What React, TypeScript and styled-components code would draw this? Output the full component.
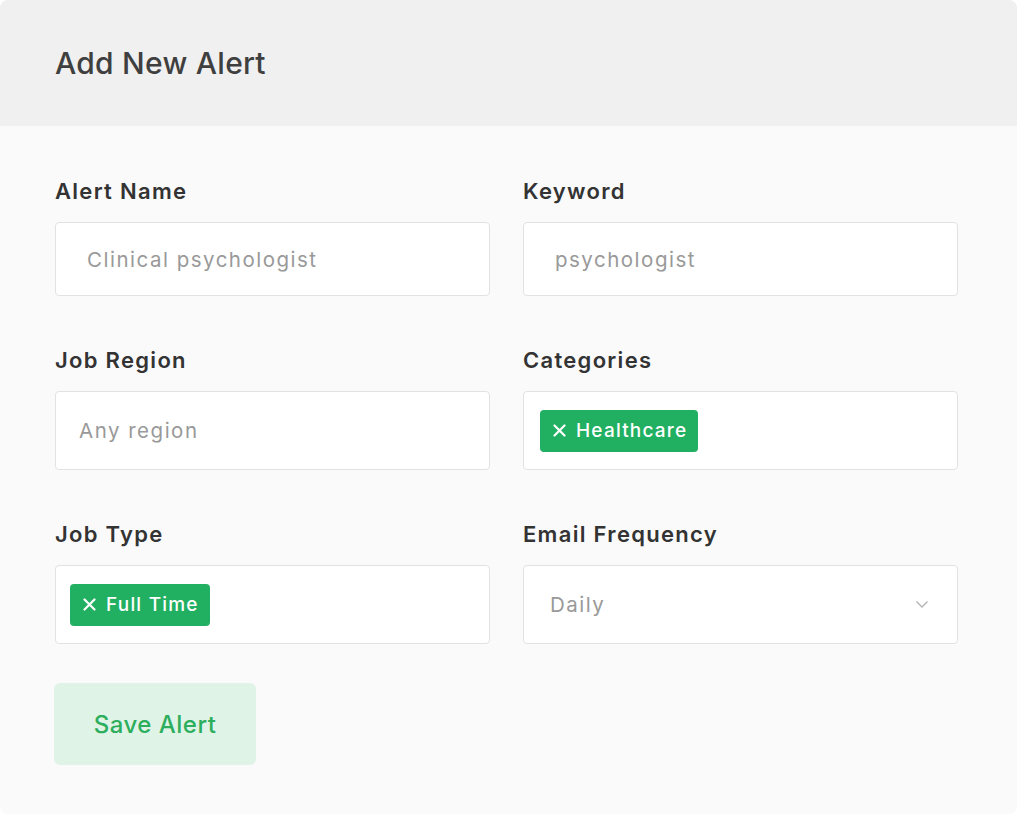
import styled, { createGlobalStyle } from "styled-components";

const GlobalStyle = createGlobalStyle`
  html, body {
    margin: 0;
    padding: 0;
    background: #ffffff;
  }
  body {
    font-family: "Inter", "Liberation Sans", sans-serif;
  }
`;

const FONT = `"Inter", "Open Sans", sans-serif`;

type FieldProps = {
  label: string;
  height: number;
  pad: number;
  children: React.ReactNode;
};

function Field({ label, height, pad, children }: FieldProps) {
  return (
    <FieldWrap>
      <Label>{label}</Label>
      <Box $height={height} $pad={pad}>
        {children}
      </Box>
    </FieldWrap>
  );
}

function Tag({ children }: { children: string }) {
  return (
    <Chip>
      <ChipX width="13" height="13" viewBox="0 0 13 13">
        <path d="M1.5 1.5 L11.5 11.5 M11.5 1.5 L1.5 11.5" stroke="#ffffff" strokeWidth="2.2" strokeLinecap="round" />
      </ChipX>
      {children}
    </Chip>
  );
}

export default function App() {
  return (
    <>
      <GlobalStyle />
      <Card>
        <Header>
          <Title>Add New Alert</Title>
        </Header>
        <Body>
          <Grid>
            <Field label="Alert Name" height={74} pad={31}>
              <Value>Clinical psychologist</Value>
            </Field>
            <Field label="Keyword" height={74} pad={31}>
              <Value>psychologist</Value>
            </Field>
            <Field label="Job Region" height={79} pad={23}>
              <Value>Any region</Value>
            </Field>
            <Field label="Categories" height={79} pad={16}>
              <Tag>Healthcare</Tag>
            </Field>
            <Field label="Job Type" height={79} pad={14}>
              <Tag>Full Time</Tag>
            </Field>
            <Field label="Email Frequency" height={79} pad={26}>
              <Value>Daily</Value>
              <Chevron width="14" height="9" viewBox="0 0 14 9">
                <path d="M1.5 1.5 L7 7 L12.5 1.5" fill="none" stroke="#b5b5b5" strokeWidth="1.4" />
              </Chevron>
            </Field>
          </Grid>
          <SaveButton>Save Alert</SaveButton>
        </Body>
      </Card>
    </>
  );
}

const Card = styled("div")`
  width: 1017px;
  height: 814px;
  border-radius: 8px;
  overflow: hidden;
  background: #fafafa;
  display: flex;
  flex-direction: column;
`;

const Header = styled("div")`
  height: 126px;
  flex: none;
  background: #f0f0f0;
  display: flex;
  align-items: center;
  padding: 0 55px;
  box-sizing: border-box;
`;

const Title = styled("h1")`
  margin: 0;
  font-family: ${FONT};
  font-size: 30px;
  font-weight: 500;
  letter-spacing: 0.25px;
  color: #3f3f3f;
`;

const Body = styled("div")`
  padding: 50px 59px 0 55px;
`;

const Grid = styled("div")`
  display: grid;
  grid-template-columns: 435px 435px;
  column-gap: 33px;
  row-gap: 49px;
`;

const FieldWrap = styled("div")`
  display: flex;
  flex-direction: column;
`;

const Label = styled("div")`
  font-family: ${FONT};
  font-size: 22px;
  font-weight: 600;
  letter-spacing: 1.3px;
  line-height: 30px;
  color: #333333;
  margin-bottom: 16px;
`;

const Box = styled("div")<{ $height: number; $pad: number }>`
  height: ${(p) => p.$height}px;
  box-sizing: border-box;
  background: #ffffff;
  border: 1px solid #e2e2e2;
  border-radius: 4px;
  display: flex;
  align-items: center;
  justify-content: space-between;
  padding: 0 28px 0 ${(p) => p.$pad}px;
`;

const Value = styled("span")`
  font-family: ${FONT};
  font-size: 20.5px;
  letter-spacing: 1.5px;
  color: #999999;
`;

const Chip = styled("span")`
  display: inline-flex;
  align-items: center;
  gap: 10px;
  height: 42px;
  padding: 0 11px 0 13px;
  border-radius: 4px;
  background: #21b062;
  color: #ffffff;
  font-family: ${FONT};
  font-size: 19px;
  font-weight: 500;
  letter-spacing: 1.2px;
`;

const ChipX = styled("svg")`
  display: block;
  flex: none;
`;

const Chevron = styled("svg")`
  display: block;
`;

const SaveButton = styled("button")`
  margin-top: 39px;
  margin-left: -1px;
  width: 202px;
  height: 82px;
  border: none;
  border-radius: 6px;
  background: #e0f3e7;
  color: #2cae5d;
  font-family: ${FONT};
  font-size: 24px;
  font-weight: 500;
  letter-spacing: 0.5px;
  cursor: pointer;
`;
